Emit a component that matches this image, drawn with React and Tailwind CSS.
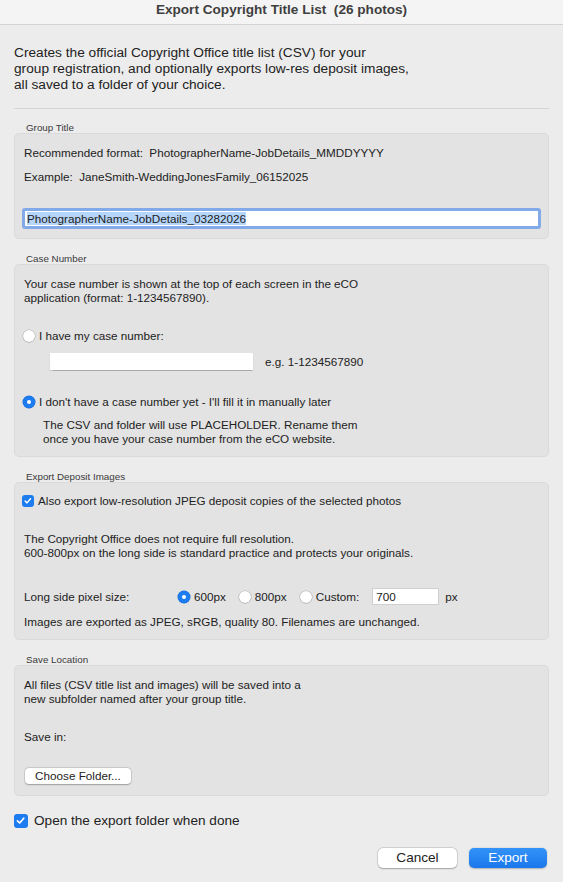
import React from "react";

function Radio({ checked }) {
  return checked ? (
    <span className="flex h-[12px] w-[12px] shrink-0 items-center justify-center rounded-full bg-[#1c7cf0] shadow-[0_0_0_0.5px_#1568d6]">
      <span className="block h-[4px] w-[4px] rounded-full bg-white" />
    </span>
  ) : (
    <span className="block h-[12px] w-[12px] shrink-0 rounded-full bg-white shadow-[0_0_0_0.5px_rgba(0,0,0,0.22),0_0.5px_1px_rgba(0,0,0,0.2)]" />
  );
}

function Check({ size = 12 }) {
  const cls =
    size === 14
      ? "flex h-[14px] w-[14px] shrink-0 items-center justify-center rounded-[3px] bg-[#1c7cf0]"
      : "flex h-[12px] w-[12px] shrink-0 items-center justify-center rounded-[3px] bg-[#1c7cf0]";
  return (
    <span className={cls}>
      <svg viewBox="0 0 12 12" className="h-[80%] w-[80%]" fill="none">
        <path d="M2.6 6.3 L5 8.6 L9.4 3.4" stroke="white" strokeWidth="1.8" strokeLinecap="round" strokeLinejoin="round" />
      </svg>
    </span>
  );
}

function Label({ children, className }) {
  return (
    <div className={"pl-[26px] text-[9.8px] leading-[11px] text-[#3a3a3a] " + className}>{children}</div>
  );
}

export default function App() {
  return (
    <div className="flex h-[882px] w-[563px] flex-col overflow-hidden bg-[#ececec] font-['Liberation_Sans',Arial,sans-serif] text-[#222222]">
      <div className="flex h-[25px] shrink-0 justify-center border-b border-[#d3d3d3] bg-[#f4f4f4]">
        <span className="text-[13.6px] font-bold leading-[19px] text-[#3f3f3f]">Export Copyright Title List&nbsp; (26 photos)</span>
      </div>

      <div className="mt-[20px] px-[14px] text-[13.7px] leading-[16px]">
        <div>Creates the official Copyright Office title list (CSV) for your</div>
        <div>group registration, and optionally exports low-res deposit images,</div>
        <div>all saved to a folder of your choice.</div>
      </div>

      <div className="mx-[14px] mt-[15px] h-px bg-[#d6d6d6]" />

      {/* Group Title */}
      <Label className="mt-[13px]">Group Title</Label>
      <div className="mx-[14px] flex flex-col rounded-[5px] border border-[#dadada] bg-[#e3e3e3] pb-[9px] pl-[9px] pt-[12px] text-[11.7px] leading-[14px]">
        <div>Recommended format:&nbsp; PhotographerName-JobDetails_MMDDYYYY</div>
        <div className="mt-[10px]">Example:&nbsp; JaneSmith-WeddingJonesFamily_06152025</div>
        <div className="-ml-[2px] mr-[7px] mt-[24px] flex h-[21px] items-center rounded-[3px] border-[3px] border-[#82a9e8] bg-white pl-[2px]">
          <span className="bg-[#b5d5fb] leading-[13px]">PhotographerName-JobDetails_03282026</span>
        </div>
      </div>

      {/* Case Number */}
      <Label className="mt-[14px]">Case Number</Label>
      <div className="mx-[14px] flex flex-col rounded-[5px] border border-[#dadada] bg-[#e3e3e3] pb-[10px] pl-[9px] pt-[12px] text-[11.7px] leading-[14px]">
        <div>Your case number is shown at the top of each screen in the eCO</div>
        <div>application (format: 1-1234567890).</div>
        <div className="-ml-[1px] mt-[24px] flex items-center gap-[4px]">
          <Radio />
          <span>I have my case number:</span>
        </div>
        <div className="mt-[10px] flex items-center">
          <div className="ml-[26px] h-[17px] w-[203px] bg-white shadow-[0_0.5px_1px_rgba(0,0,0,0.25)]" />
          <span className="ml-[12px]">e.g. 1-1234567890</span>
        </div>
        <div className="-ml-[1px] mt-[25px] flex items-center gap-[4px]">
          <Radio checked />
          <span>I don't have a case number yet - I'll fill it in manually later</span>
        </div>
        <div className="mt-[9px] pl-[19px]">
          <div>The CSV and folder will use PLACEHOLDER. Rename them</div>
          <div>once you have your case number from the eCO website.</div>
        </div>
      </div>

      {/* Export Deposit Images */}
      <Label className="mt-[14px]">Export Deposit Images</Label>
      <div className="mx-[14px] flex flex-col rounded-[5px] border border-[#dadada] bg-[#e3e3e3] pb-[10px] pl-[9px] pt-[11px] text-[11.7px] leading-[14px]">
        <div className="-ml-[2px] flex items-center gap-[4px]">
          <Check />
          <span>Also export low-resolution JPEG deposit copies of the selected photos</span>
        </div>
        <div className="mt-[24px]">
          <div>The Copyright Office does not require full resolution.</div>
          <div>600-800px on the long side is standard practice and protects your originals.</div>
        </div>
        <div className="mt-[28px] flex h-[17px] items-center">
          <span className="w-[154px] shrink-0">Long side pixel size:</span>
          <Radio checked />
          <span className="ml-[4px]">600px</span>
          <span className="ml-[13px] block"><Radio /></span>
          <span className="ml-[4px]">800px</span>
          <span className="ml-[13px] block"><Radio /></span>
          <span className="ml-[4px]">Custom:</span>
          <div className="ml-[13px] flex h-[17px] w-[67px] items-center border border-[#d0d0d0] bg-white pl-[3px]">700</div>
          <span className="ml-[6px]">px</span>
        </div>
        <div className="mt-[10px]">Images are exported as JPEG, sRGB, quality 80. Filenames are unchanged.</div>
      </div>

      {/* Save Location */}
      <Label className="mt-[14px]">Save Location</Label>
      <div className="mx-[14px] flex flex-col rounded-[5px] border border-[#dadada] bg-[#e3e3e3] pb-[11px] pl-[9px] pt-[12px] text-[11.7px] leading-[14px]">
        <div>All files (CSV title list and images) will be saved into a</div>
        <div>new subfolder named after your group title.</div>
        <div className="mt-[24px]">Save in:</div>
        <div className="mt-[24px] ml-[1px] flex h-[16px] w-[106px] items-center justify-center rounded-[4px] bg-white shadow-[0_0_0_0.5px_rgba(0,0,0,0.15),0_0.5px_1.5px_rgba(0,0,0,0.25)]">
          Choose Folder...
        </div>
      </div>

      <div className="ml-[14px] mt-[17px] flex h-[16px] items-center gap-[6px] text-[13.6px]">
        <Check size={14} />
        <span>Open the export folder when done</span>
      </div>

      <div className="mr-[16px] mt-[19px] flex justify-end gap-[12px] text-[13.6px]">
        <div className="flex h-[20px] w-[79px] items-center justify-center rounded-[5px] bg-white shadow-[0_0_0_0.5px_rgba(0,0,0,0.15),0_0.5px_1.5px_rgba(0,0,0,0.25)]">
          Cancel
        </div>
        <div className="flex h-[20px] w-[78px] items-center justify-center rounded-[5px] bg-gradient-to-b from-[#3393f8] to-[#1a77ec] text-white shadow-[0_0.5px_1.5px_rgba(0,0,0,0.25)]">
          Export
        </div>
      </div>
    </div>
  );
}
